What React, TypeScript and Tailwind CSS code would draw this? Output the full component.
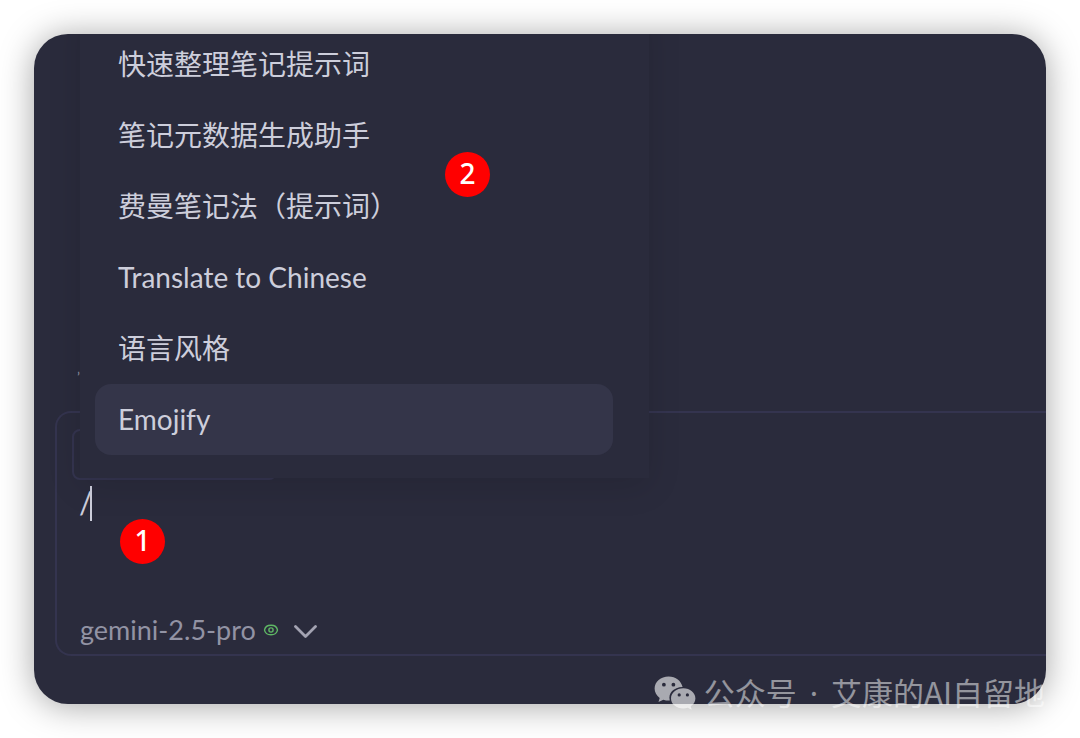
import { useState } from "react";
import clsx from "clsx";

const prompts = [
  "快速整理笔记提示词",
  "笔记元数据生成助手",
  "费曼笔记法（提示词）",
  "Translate to Chinese",
  "语言风格",
  "Emojify",
];

function Badge({ label, className }: { label: string; className: string }) {
  return (
    <span
      className={clsx(
        "absolute flex h-[45px] w-[45px] items-center justify-center rounded-full bg-[#ff0000] pb-1 font-['Noto_Sans','Noto_Sans_CJK_SC',sans-serif] text-[28px] font-medium leading-none text-white",
        className
      )}
    >
      {label}
    </span>
  );
}

function PromptMenu() {
  const [active, setActive] = useState(prompts.length - 1);

  return (
    <div className="absolute bottom-44 left-[23px] w-[569px] bg-[#2a2b3c] pt-6 pr-9 pb-[23px] pl-[15px] shadow-[0_8px_32px_rgba(0,0,0,0.12)]">
      <ul>
        {prompts.map((prompt, i) => (
          <li key={prompt}>
            <button
              type="button"
              onMouseEnter={() => setActive(i)}
              className={clsx(
                "flex h-[71px] w-full items-center rounded-2xl px-[23px] pb-0.5 text-left text-[28px] leading-9 text-[#cdcedb]",
                i === active && "bg-[#343549]"
              )}
            >
              {prompt}
            </button>
          </li>
        ))}
      </ul>
      <Badge label="2" className="bottom-[281px] left-[365px]" />
    </div>
  );
}

function EyeIcon() {
  return (
    <svg className="h-4 w-4" viewBox="0 0 16 16" fill="none" stroke="#5fb865" strokeWidth="1.4">
      <path d="M1.5 8C2 5.2 4.6 3.2 8 3.2S14 5.2 14.5 8C14 10.8 11.4 12.8 8 12.8S2 10.8 1.5 8Z" />
      <circle cx="8" cy="8" r="2.1" />
    </svg>
  );
}

function ChevronIcon() {
  return (
    <svg className="h-6 w-6" viewBox="0 0 24 24" fill="none" stroke="#a3a3b2" strokeWidth="2.8" strokeLinecap="round" strokeLinejoin="round">
      <path d="M2.5 8.5L12.5 18.5L22.5 8.5" />
    </svg>
  );
}

function WeChatIcon() {
  return (
    <svg className="h-[34px] w-[42px] text-white/60" viewBox="0 0 42 34" fill="currentColor">
      <path
        fillRule="evenodd"
        d="M14.6 0.5C6.8 0.5 0.6 5.8 0.6 12.6C0.6 16.4 2.6 19.7 5.7 21.9L4.5 26L9.3 23.7C11.2 24.3 13.4 24.7 15.8 24.6C13.9 17.4 19.6 11.2 28.6 11.1C27.4 5.1 21.7 0.5 14.6 0.5ZM9.9 6.8A1.9 1.9 0 1 1 9.9 10.6A1.9 1.9 0 1 1 9.9 6.8ZM19.4 6.8A1.9 1.9 0 1 1 19.4 10.6A1.9 1.9 0 1 1 19.4 6.8Z"
      />
      <path
        fillRule="evenodd"
        d="M29.3 12.3C22.5 12.3 17 16.8 17 22.4C17 28 22.5 32.4 29.3 32.4C30.9 32.4 32.4 32.2 33.8 31.7L37.7 33.7L36.7 30.3C39.5 28.5 41.4 25.6 41.4 22.4C41.4 16.8 36 12.3 29.3 12.3ZM25.2 17.3A1.6 1.6 0 1 1 25.2 20.5A1.6 1.6 0 1 1 25.2 17.3ZM33.4 17.3A1.6 1.6 0 1 1 33.4 20.5A1.6 1.6 0 1 1 33.4 17.3Z"
      />
    </svg>
  );
}

function Composer() {
  const [text, setText] = useState("/");

  return (
    <div className="relative rounded-l-2xl border-2 border-r-0 border-[#34344f] pt-4 pl-[15px]">
      <div className="h-[51px] w-[205px] rounded-lg border-2 border-[#34344f]" />
      <div className="relative pl-[7px]">
        <textarea
          aria-label="Message"
          value={text}
          onChange={(e) => setText(e.target.value)}
          className="block h-[130px] w-full resize-none bg-transparent pt-1 text-[30px] leading-9 text-[#cdcedb] caret-transparent outline-none"
        />
        {/* Caret */}
        <span className="absolute top-1.5 left-[18px] h-[35px] w-0.5 bg-[#cdcedb]" />
        <Badge label="1" className="top-[39px] left-12" />
      </div>
      <button type="button" className="flex h-11 items-center pb-1 pl-2 text-[27px] leading-9 text-[#9293a4]">
        <span className="mr-[7px]">gemini-2.5-pro</span>
        <EyeIcon />
        <span className="ml-3.5">
          <ChevronIcon />
        </span>
      </button>
      <PromptMenu />
    </div>
  );
}

export default function App() {
  return (
    <div className="relative flex min-h-screen flex-col bg-white p-[34px] font-['Lato','Noto_Sans_CJK_SC',sans-serif]">
      <main className="flex flex-1 flex-col justify-end overflow-hidden rounded-[34px] bg-[#2a2b3c] pb-12 pl-[21px] shadow-[0_2px_34px_rgba(0,0,0,0.36)]">
        <p className="mb-5 pl-[22px] text-sm leading-7 text-[#9293a4]">’</p>
        <Composer />
      </main>
      <div className="absolute right-[35px] bottom-[25px] flex items-center gap-2 whitespace-nowrap text-white/50">
        <WeChatIcon />
        <span className="font-['Noto_Sans_CJK_SC',sans-serif] text-[31px] leading-10">
          公众号 <span className="px-1.5 font-['Noto_Sans',sans-serif]">·</span> 艾康的AI自留地
        </span>
      </div>
    </div>
  );
}
